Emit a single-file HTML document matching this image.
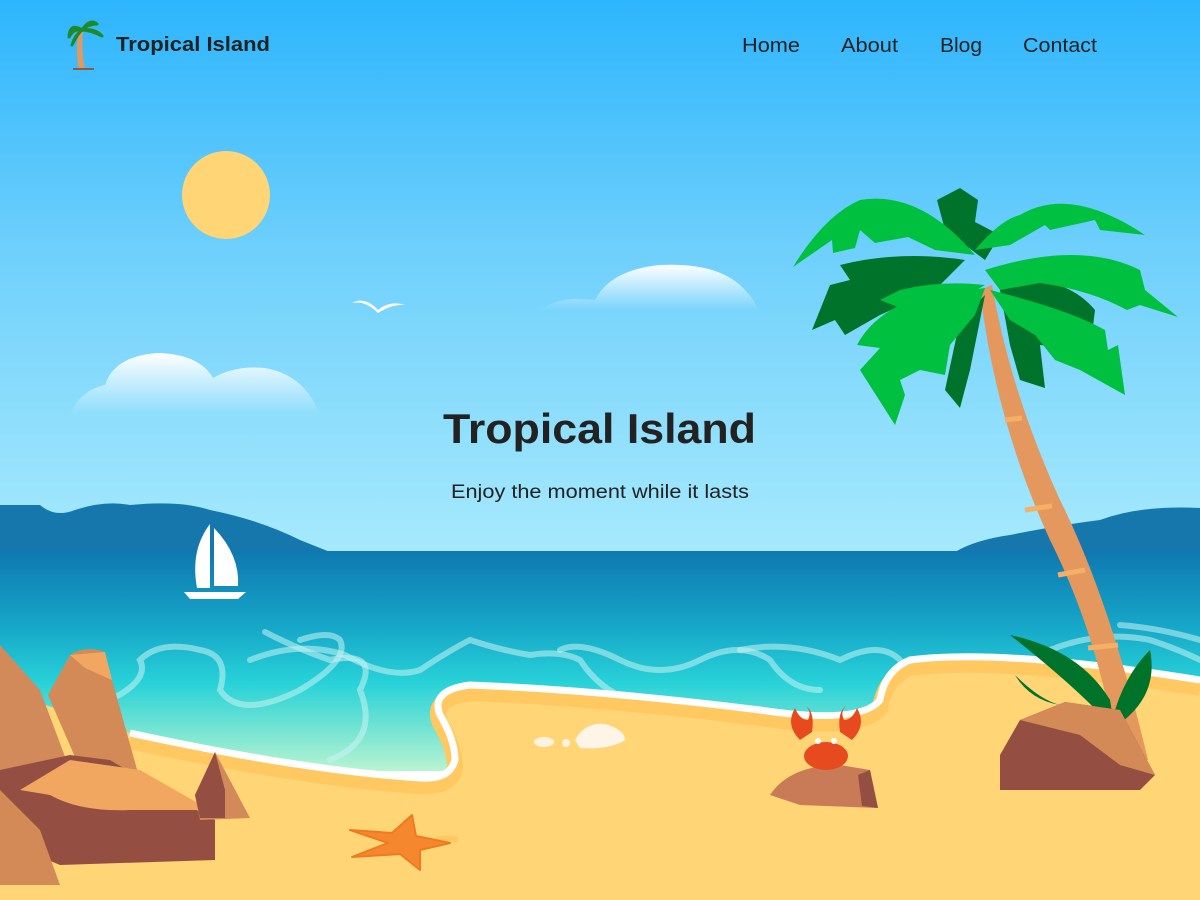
<!DOCTYPE html>
<html><head><meta charset="utf-8"><style>
html,body{margin:0;padding:0;width:1200px;height:900px;overflow:hidden}
svg{display:block}
</style></head><body>
<svg width="1200" height="900" viewBox="0 0 1200 900" xmlns="http://www.w3.org/2000/svg">
<defs>
<linearGradient id="sky" x1="0" y1="0" x2="0" y2="1"><stop offset="0" stop-color="#2db5fd"/><stop offset="0.45" stop-color="#6fd0fc"/><stop offset="1" stop-color="#a8eafd"/></linearGradient>
<linearGradient id="sea" x1="0" y1="0" x2="0" y2="1"><stop offset="0" stop-color="#0e78b0"/><stop offset="0.35" stop-color="#16a8c9"/><stop offset="0.6" stop-color="#28d2d8"/><stop offset="1" stop-color="#b8f4d0"/></linearGradient>
<linearGradient id="cloud" x1="0" y1="0" x2="0" y2="1"><stop offset="0" stop-color="#fff"/><stop offset="1" stop-color="#fff" stop-opacity="0"/></linearGradient>
</defs>
<rect width="1200" height="560" fill="url(#sky)"/>
<circle cx="226" cy="195" r="44" fill="#ffd575"/>
<path d="M540 310 Q560 295 595 300 Q610 270 660 265 Q720 262 745 290 Q755 300 758 310 Z" fill="url(#cloud)"/>
<path d="M70 415 Q80 390 105 385 Q115 355 160 353 Q200 355 213 378 Q235 365 265 368 Q305 375 320 415 Z" fill="url(#cloud)"/>
<path d="M352 303 Q365 296 378 310 Q390 300 405 305 Q392 304 378 313 Q365 300 352 303Z" fill="#fff"/>
<path d="M0 505 L40 505 Q55 518 75 510 Q105 500 130 505 Q180 500 210 510 Q260 520 300 540 L330 552 L0 552 Z" fill="#1677ad"/>
<path d="M955 552 Q975 540 1010 535 Q1060 525 1100 520 Q1140 505 1200 508 L1200 552 Z" fill="#1677ad"/>
<rect y="551" width="1200" height="220" fill="url(#sea)"/>
<g fill="none" stroke="#c8f4f4" stroke-opacity="0.55" stroke-width="6" stroke-linecap="round">
<path d="M110 700 Q150 680 140 660 Q160 640 200 650 Q230 655 220 690 Q240 720 300 690 Q350 660 340 640 Q330 630 300 640"/>
<path d="M265 632 Q300 650 330 660 Q380 650 360 690 Q380 740 330 760"/>
<path d="M250 660 Q300 640 345 655 Q390 680 420 670 Q450 650 470 640 Q500 650 530 655 Q560 650 580 660 Q600 690 630 700"/>
<path d="M560 650 Q580 640 620 660 Q660 680 700 660 Q740 640 770 660 Q790 690 820 690"/>
<path d="M740 650 Q790 640 840 660 Q880 640 900 660"/>
<path d="M1050 650 Q1100 630 1150 640 Q1180 650 1200 660"/>
<path d="M1120 625 Q1160 628 1200 640"/>
</g>
<path d="M0 690 L130 733 Q300 770 420 778 Q450 780 455 760 Q455 740 440 715 Q430 690 470 685 Q600 690 760 710 Q860 725 880 700 Q885 670 910 660 Q1000 648 1200 680 L1200 900 L0 900 Z" fill="#ffd576"/>
<path d="M130 733 Q300 770 420 778 Q450 780 455 760 Q455 740 440 715 Q430 690 470 685 Q600 690 760 710 Q860 725 880 700 Q885 670 910 660 Q1000 648 1200 680" fill="none" stroke="#ffc860" stroke-width="16" transform="translate(0,8)"/>
<path d="M130 733 Q300 770 420 778 Q450 780 455 760 Q455 740 440 715 Q430 690 470 685 Q600 690 760 710 Q860 725 880 700 Q885 670 910 660 Q1000 648 1200 680" fill="none" stroke="#fff" stroke-width="7"/>
<path d="M210 524 Q190 550 197 588 L210 588 Z M214 528 Q240 555 238 586 L214 586 Z" fill="#fff"/>
<path d="M184 592 L246 592 L238 599 L190 599 Z" fill="#fff"/>
<ellipse cx="544" cy="742" rx="10" ry="5" fill="#fff2e0"/>
<circle cx="566" cy="743" r="4" fill="#fff2e0"/>
<path d="M575 740 Q585 722 605 724 Q625 730 625 740 Q610 750 580 748 Z" fill="#fff4e8"/>
<path d="M458 840 Q445 836 430 843" stroke="#ffc860" stroke-width="6" fill="none"/>
<path d="M350 830 L392 833 L412 815 L416 836 L450 843 L420 850 L420 870 L400 854 L352 857 L388 843 Z" fill="#f5882f" stroke="#f07a20" stroke-width="2" stroke-linejoin="round"/>
<path d="M0 645 L40 690 L70 770 L0 790 Z" fill="#d28a5a"/>
<path d="M48 695 L70 655 Q85 645 105 652 L112 680 L140 780 L85 780 Z" fill="#d48a56"/>
<path d="M70 655 L105 652 L112 680 L85 668 Z" fill="#f2a760"/>
<path d="M0 770 L70 755 L110 760 L160 790 L215 820 L215 860 L60 865 L0 840 Z" fill="#944f42"/>
<path d="M20 790 L70 760 L140 770 L210 810 L130 810 Q80 812 50 795 Z" fill="#f2a760"/>
<path d="M0 790 L40 830 L60 885 L0 885 Z" fill="#d48a56"/>
<path d="M195 795 L215 752 L250 818 L200 820 Z" fill="#d28a5a"/>
<path d="M195 795 L215 752 L225 790 L225 818 L200 818 Z" fill="#944f42"/>
<path d="M770 795 Q790 765 840 765 L870 770 L878 808 L800 805 Z" fill="#c97a56"/>
<path d="M858 775 L870 770 L878 808 L862 806 Z" fill="#944f42"/>
<ellipse cx="826" cy="756" rx="22" ry="14" fill="#e84a1f"/>
<path d="M800 740 Q785 725 795 708 Q800 720 808 720 Q812 712 806 706 Q815 712 812 732 Z M852 740 Q867 725 857 708 Q852 720 844 720 Q840 712 846 706 Q837 712 840 732 Z" fill="#e84a1f"/>
<circle cx="818" cy="741" r="3" fill="#fff"/><circle cx="834" cy="741" r="3" fill="#fff"/>
<path d="M980 290 L992 285 Q1010 390 1060 500 Q1110 600 1148 760 L1118 760 Q1100 640 1050 540 Q995 420 980 290 Z" fill="#e4985d"/>
<path d="M1005 420 L1022 418 M1025 510 L1052 506 M1058 575 L1085 570 M1088 648 L1118 645" stroke="#f5b065" stroke-width="5"/>
<g fill="#00732a">
<path d="M937 200 L960 188 L978 200 L975 222 L1000 235 L985 260 L945 230 Z"/>
<path d="M965 260 Q900 250 840 265 L850 280 L830 285 L812 330 L835 320 L845 335 L880 315 L935 290 Z"/>
<path d="M985 295 L960 320 L945 390 L960 408 L970 370 L975 345 Z"/>
<path d="M1000 290 L1010 345 L1020 380 L1045 388 L1040 345 L1090 350 L1095 310 Q1070 280 1020 278 Z"/>
</g>
<g fill="#00c040">
<path d="M975 255 Q920 190 860 200 Q825 215 793 267 L832 240 L833 253 L855 248 L860 230 L875 243 L908 237 L935 250 Z"/>
<path d="M975 250 Q1000 220 1020 215 Q1070 185 1145 235 L1100 230 L1095 220 L1050 230 L1045 225 L1010 245 Z"/>
<path d="M985 270 Q1080 240 1140 270 L1145 290 L1178 317 L1140 305 L1127 310 Q1090 290 1040 283 L1000 290 Z"/>
<path d="M990 290 Q1070 310 1105 330 L1108 350 L1118 345 L1125 395 L1080 370 L1055 360 L1035 335 L1010 320 Z"/>
<path d="M985 288 Q930 295 900 305 Q870 320 857 345 L880 348 L860 370 L895 425 L905 395 L900 380 L920 370 L945 375 L950 345 L975 315 Z"/>
<path d="M985 285 Q940 280 900 290 L880 300 L905 310 L930 300 L960 300 Z"/>
</g>
<path d="M1010 635 Q1080 650 1110 700 L1115 730 Q1080 690 1010 635 Z" fill="#00732a"/>
<path d="M1150 650 Q1160 700 1110 730 Q1120 680 1150 650 Z" fill="#00732a"/>
<path d="M1015 675 Q1040 700 1060 705 Q1030 700 1015 675Z" fill="#00732a"/>
<path d="M1000 755 L1020 720 L1065 702 L1120 710 L1155 775 L1140 790 L1000 790 Z" fill="#944f42"/>
<path d="M1020 720 L1065 702 L1120 710 L1155 775 L1120 765 L1080 735 Z" fill="#d48a56"/>
<g font-family="Liberation Sans, sans-serif" fill="#222">
<text x="116" y="51" font-size="20" font-weight="bold" textLength="154" lengthAdjust="spacingAndGlyphs">Tropical Island</text>
<text x="742" y="52" font-size="20" textLength="58" lengthAdjust="spacingAndGlyphs">Home</text>
<text x="841" y="52" font-size="20" textLength="57" lengthAdjust="spacingAndGlyphs">About</text>
<text x="940" y="52" font-size="20" textLength="42" lengthAdjust="spacingAndGlyphs">Blog</text>
<text x="1023" y="52" font-size="20" textLength="74" lengthAdjust="spacingAndGlyphs">Contact</text>
<text x="443" y="443" font-size="42" font-weight="bold" textLength="313" lengthAdjust="spacingAndGlyphs">Tropical Island</text>
<text x="451" y="498" font-size="19" textLength="298" lengthAdjust="spacingAndGlyphs">Enjoy the moment while it lasts</text>
</g>
<path d="M79 30 Q75 50 79 70 L85 70 Q81 50 83 30 Z" fill="#e4985d"/>
<rect x="73" y="68" width="21" height="2" fill="#8a5a44"/>
<path d="M82 30 Q70 22 69 37 Q74 28 82 30 Q90 18 97 24 Q88 24 82 30 Q95 28 102 36 Q90 30 82 30 Q75 35 72 45 Q78 33 82 30 Z" fill="#1e8a2a" stroke="#1e8a2a" stroke-width="3" stroke-linejoin="round"/>
</svg>
</body></html>
